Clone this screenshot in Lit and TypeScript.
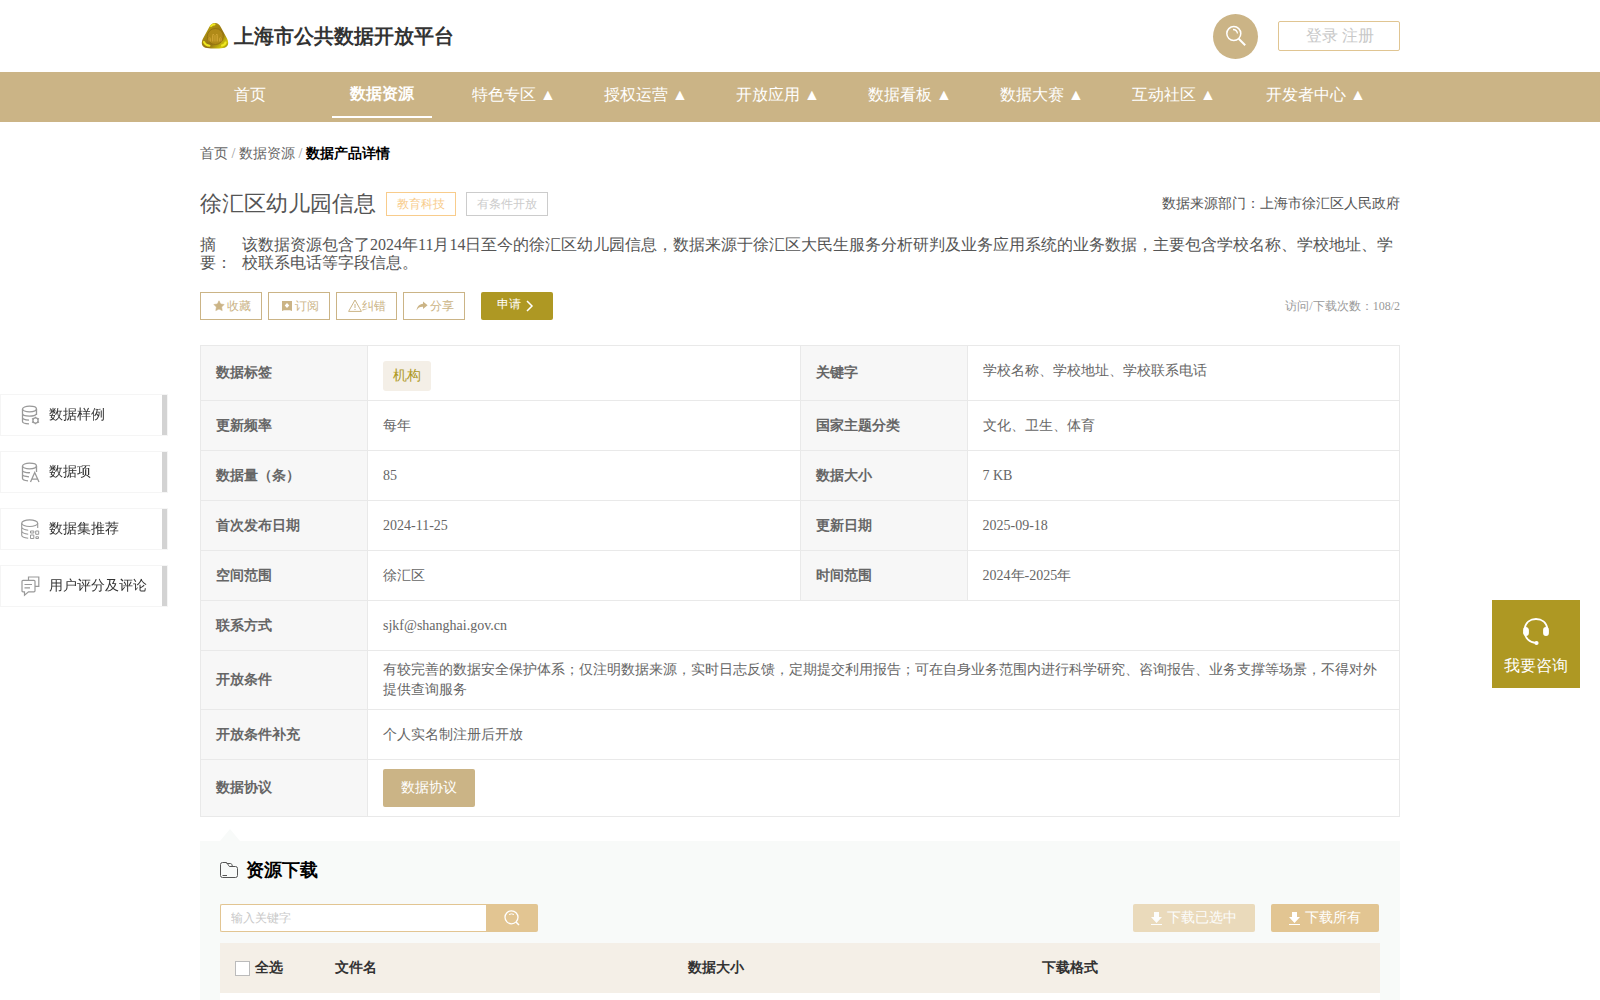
import { LitElement, html, css, svg, nothing } from "lit";
import { customElement } from "lit/decorators.js";
import { classMap } from "lit/directives/class-map.js";

interface NavItem {
  label: string;
  menu?: boolean;
  active?: boolean;
}

const NAV: NavItem[] = [
  { label: "首页" },
  { label: "数据资源", active: true },
  { label: "特色专区", menu: true },
  { label: "授权运营", menu: true },
  { label: "开放应用", menu: true },
  { label: "数据看板", menu: true },
  { label: "数据大赛", menu: true },
  { label: "互动社区", menu: true },
  { label: "开发者中心", menu: true },
];

const PAIRS: [string, string, string, string][] = [
  ["更新频率", "每年", "国家主题分类", "文化、卫生、体育"],
  ["数据量（条）", "85", "数据大小", "7 KB"],
  ["首次发布日期", "2024-11-25", "更新日期", "2025-09-18"],
  ["空间范围", "徐汇区", "时间范围", "2024年-2025年"],
];

const WIDE: [string, string][] = [
  ["联系方式", "sjkf@shanghai.gov.cn"],
  [
    "开放条件",
    "有较完善的数据安全保护体系；仅注明数据来源，实时日志反馈，定期提交利用报告；可在自身业务范围内进行科学研究、咨询报告、业务支撑等场景，不得对外提供查询服务",
  ],
  ["开放条件补充", "个人实名制注册后开放"],
];

const ACTIONS = [
  {
    label: "收藏",
    icon: svg`<path d="M6 .8l1.600 3.200 3.500.5-2.500 2.500.6 3.600L6 9l-3.200 1.600.6-3.600L.9 4.500l3.500-.5z" fill="currentColor" stroke="currentColor" stroke-width=".6"/>`,
  },
  {
    label: "订阅",
    icon: svg`<path fill-rule="evenodd" d="M1 1h10v10L9 10.200H3L1 11zM6 3l-2.300 2.500L6 8l2.300-2.500z" fill="currentColor"/>`,
  },
  {
    label: "纠错",
    wide: true,
    icon: svg`<path d="M7 1L13.400 12.400H.6z" fill="none" stroke="currentColor" stroke-linejoin="round"/><path d="M7 5v4M7 10v1" stroke="currentColor"/>`,
  },
  {
    label: "分享",
    icon: svg`<path d="M7 1.500l4.600 3.800L7 9V6.800C4 6.700 2 7.600.6 10.400 1 6.600 3.300 4 7 3.700z" fill="currentColor"/>`,
  },
];

const SIDE = [
  {
    label: "数据样例",
    icon: svg`<ellipse cx="9.500" cy="4" rx="7" ry="2.800"/><path d="M2.500 4v12.500c0 1.400 2.500 2.200 6.500 2.400M16.500 4v6M2.500 8.500c0 1.500 3 2.600 7 2.600 3.300 0 6-.8 6.800-2M2.500 12.600c0 1.400 2.400 2.400 6.500 2.600"/><circle cx="15.500" cy="15.500" r="2.600"/><path d="M15.500 11.700v1.200M15.500 18.100v1.200M12 13.500l1.300.8M17.700 16.700l1.300.8M12 17.500l1.300-.8M17.700 14.300l1.300-.8"/>`,
  },
  {
    label: "数据项",
    icon: svg`<ellipse cx="9.500" cy="4" rx="7" ry="2.800"/><path d="M2.500 4v12.500c0 1.200 2.200 2 5.500 2.300M16.500 4v6M2.500 8.500c0 1.300 3 2.400 7.500 2.200M2.500 12.600c0 1.200 2.400 2 6.500 2.200"/><path d="M10.500 20l4.200-9.500L19 20M12 17.200h5.500"/>`,
  },
  {
    label: "数据集推荐",
    icon: svg`<ellipse cx="9.700" cy="4.200" rx="8" ry="3.300" stroke-width="1.200"/><path d="M1.700 4.200v12c0 1.600 2.500 2.600 6.500 3.100M17.700 4.200V9M1.700 8.200c.5 1.600 3 2.600 6.500 3M1.700 12.200c.5 1.600 2.500 2.600 6.500 3" stroke-width="1.100"/><path d="M10.500 12h3.300v2H10.500zM15.700 12h3v3.300h-3zM10.500 16h3.300v3.500H10.500zM15.900 17.800h2.600v1.700h-2.600z" stroke-width="1"/>`,
  },
  {
    label: "用户评分及评论",
    icon: svg`<path d="M8.500 4.300V1h10.300v9.300h-3.500M3 4.300H14q1 0 1 1v9.500q0 1-1 1H8.500l-4 3.500v-3.500H3q-1 0-1-1V5.300q0-1 1-1z" stroke-width="1.200"/><path d="M4.500 8.500H12M4.500 11.800H10" stroke-width="1.200"/>`,
  },
];

@customElement("app-root")
export class AppRoot extends LitElement {
  static styles = css`
    :host {
      display: block;
      height: 100vh;
      overflow: hidden;
      background: #fff;
      color: #666;
      font-family: "Liberation Serif", serif;
      font-size: 14px;
      line-height: 20px;
    }
    * {
      box-sizing: border-box;
    }
    button,
    input {
      font: inherit;
      margin: 0;
      padding: 0;
    }
    button {
      cursor: pointer;
    }
    a {
      color: inherit;
      text-decoration: none;
    }
    svg {
      display: block;
      flex: none;
    }
    .wrap {
      max-width: 1200px;
      margin: 0 auto;
    }
    .top {
      display: flex;
      align-items: center;
      height: 72px;
    }
    .brand {
      display: flex;
      align-items: center;
      gap: 4px;
      margin-right: auto;
      color: #333;
    }
    .brand h1 {
      margin: 0;
      font-size: 20px;
      line-height: 24px;
    }
    .round {
      display: grid;
      place-items: center;
      width: 45px;
      height: 45px;
      margin-right: 20px;
      border: 0;
      border-radius: 50%;
      background: #cbb486;
      color: #fff;
    }
    .login {
      display: flex;
      justify-content: center;
      gap: 4px;
      width: 122px;
      height: 30px;
      padding-left: 1px;
      border: 1px solid #e0c592;
      border-radius: 2px;
      color: #c8c8c8;
      font-size: 16px;
      line-height: 28px;
    }
    .bar {
      background: #cbb486;
    }
    .nav {
      display: flex;
      gap: 32px;
      height: 50px;
      color: #fff;
      font-size: 16px;
    }
    .nav a {
      min-width: 100px;
      height: 46px;
      padding: 0 8px;
      line-height: 46px;
      text-align: center;
      white-space: nowrap;
    }
    .nav .last {
      padding: 0 10px;
    }
    .nav .on {
      border-bottom: 2px solid #fff;
      font-weight: bold;
      line-height: 44px;
    }
    .crumbs {
      padding-top: 22px;
      color: #999;
    }
    .crumbs a {
      color: #666;
    }
    .crumbs b {
      color: #000;
    }
    .head {
      display: flex;
      align-items: center;
      gap: 10px;
      margin-top: 24px;
      height: 32px;
      color: #555;
    }
    .head h2 {
      margin: 0;
      font-size: 22px;
      font-weight: normal;
      line-height: 32px;
    }
    .tag {
      height: 24px;
      padding: 0 10px;
      border: 1px solid #ccc;
      color: #ccc;
      font-size: 12px;
      line-height: 22px;
    }
    .tag.warm {
      border-color: #f8cc8c;
      color: #f8cc8c;
    }
    .source {
      margin-left: auto;
    }
    .summary {
      display: flex;
      gap: 10px;
      margin: 16px 0 0;
      color: #555;
      font-size: 16px;
      line-height: 18px;
    }
    .summary dt {
      flex: none;
      width: 32px;
    }
    .summary dd {
      margin: 0;
    }
    .acts {
      display: flex;
      align-items: center;
      gap: 6px;
      margin-top: 20px;
      color: #999;
      font-size: 12px;
    }
    .act {
      display: flex;
      align-items: center;
      justify-content: center;
      gap: 2px;
      width: 62px;
      height: 28px;
      padding-left: 2px;
      border: 1px solid #cbb486;
      background: #fff;
      color: #cbb486;
    }
    .act.wide {
      gap: 0;
      width: 61px;
      padding: 0;
    }
    .apply {
      display: flex;
      align-items: center;
      gap: 4px;
      width: 72px;
      height: 28px;
      margin-left: 10px;
      padding: 0 16px;
      border: 0;
      border-radius: 2px;
      background: #ae9823;
      color: #fff;
    }
    .apply span {
      padding-bottom: 4px;
    }
    .visits {
      margin-left: auto;
    }
    .info {
      width: 100%;
      margin-top: 25px;
      border-collapse: collapse;
      table-layout: fixed;
    }
    .info th,
    .info td {
      height: 50px;
      padding: 9px 15px;
      border: 1px solid #e9e9e9;
      text-align: left;
    }
    .info th {
      background: #f7f7f7;
    }
    .info .key {
      width: 167px;
    }
    .info .first th,
    .info .first td {
      height: 55px;
    }
    .info .up {
      padding-bottom: 13px;
    }
    .info .low {
      padding: 15px 15px 9px;
    }
    .chip {
      display: block;
      width: max-content;
      height: 30px;
      padding: 0 10px;
      border-radius: 3px;
      background: #f4efe7;
      color: #ae9823;
      line-height: 30px;
    }
    .deal {
      display: block;
      height: 38px;
      padding: 0 18px;
      border: 0;
      border-radius: 2px;
      background: #cbb486;
      color: #fff;
    }
    .files {
      position: relative;
      margin-top: 24px;
      padding: 17px 20px 40px;
      background: #f8faf9;
    }
    .files::before {
      content: "";
      position: absolute;
      left: 20px;
      top: -12px;
      border: 10px solid transparent;
      border-top: 0;
      border-bottom: 12px solid #f8faf9;
    }
    .files h3 {
      display: flex;
      align-items: center;
      gap: 8px;
      margin: 0;
      color: #000;
      font-size: 18px;
      line-height: 24px;
    }
    .tools {
      display: flex;
      gap: 16px;
      height: 28px;
      margin: 22px 1px 11px 0;
    }
    .find {
      display: flex;
      width: 318px;
      margin-right: auto;
    }
    .find input {
      flex: 1;
      min-width: 0;
      padding: 0 10px;
      border: 1px solid #e2c592;
      border-right: 0;
      border-radius: 2px 0 0 2px;
      background: #fff;
      font-size: 12px;
      outline: none;
    }
    .find input::placeholder {
      color: #c8c8c8;
      opacity: 1;
    }
    .find button {
      display: grid;
      place-items: center;
      width: 52px;
      border: 0;
      border-radius: 0 2px 2px 0;
      background: #e2c592;
      color: #fff;
    }
    .get {
      display: flex;
      align-items: center;
      gap: 5px;
      padding: 0 18px;
      border: 0;
      border-radius: 2px;
      background: #e2c592;
      color: #fff;
    }
    .get:disabled {
      opacity: 0.6;
    }
    .list {
      width: 100%;
      border-collapse: collapse;
      background: #fff;
      color: #333;
    }
    .list th {
      height: 50px;
      padding: 0 15px;
      background: #f4efe7;
      text-align: left;
    }
    .list td {
      height: 50px;
    }
    .list .pick {
      width: 100px;
    }
    .list .name {
      width: 353px;
    }
    .list .size {
      width: 354px;
    }
    .all {
      display: flex;
      align-items: center;
      gap: 5px;
    }
    .all input {
      appearance: none;
      width: 15px;
      height: 15px;
      border: 1px solid #bbb;
      background: #fff;
    }
    .side {
      position: fixed;
      left: 0;
      top: 394px;
      display: grid;
      gap: 15px;
      color: #333;
    }
    .side a {
      display: flex;
      align-items: center;
      gap: 9px;
      width: 168px;
      height: 42px;
      padding-left: 19px;
      border: 1px solid #f5f5f5;
      background: linear-gradient(#d3d3d3, #d3d3d3) right / 5px 100% no-repeat #fff;
    }
    .ask {
      position: fixed;
      right: 20px;
      top: 600px;
      display: flex;
      flex-direction: column;
      align-items: center;
      gap: 10px;
      width: 88px;
      height: 88px;
      padding-top: 17px;
      background: #ae9823;
      color: #fff;
      font-size: 16px;
    }
  `;

  private navLink(item: NavItem, index: number) {
    const cls = { on: !!item.active, last: index === NAV.length - 1 };
    return html`<a class=${classMap(cls)} href="#">${item.label}${item.menu ? " ▲" : nothing}</a>`;
  }

  private downIcon() {
    return html`<svg width="11" height="13" viewBox="0 0 11 13" fill="#fff" aria-hidden="true">
      <path d="M3 0h5v5h3L5.500 11 0 5h3zM0 12h11v1H0z" />
    </svg>`;
  }

  render() {
    return html`
      <header>
        <div class="wrap top">
          <a class="brand" href="#">
            <svg width="30" height="26" viewBox="0 0 30 26" aria-hidden="true">
              <defs>
                <linearGradient id="gold" x1="0" y1="0" x2="1" y2="1">
                  <stop offset="0" stop-color="#d9cc10" />
                  <stop offset=".3" stop-color="#a98c10" />
                  <stop offset=".6" stop-color="#947214" />
                  <stop offset=".85" stop-color="#d2c80a" />
                  <stop offset="1" stop-color="#7e6a10" />
                </linearGradient>
              </defs>
              <path d="M15 0c3 0 4.500 1.500 6 4.500l6 11c2.500 5 1 9-4 9.500-5 .7-11 .7-16 0-5-.5-6.500-4.500-4-9.500l6-11C10.500 1.500 12 0 15 0z" fill="url(#gold)" />
              <circle cx="15.300" cy="13.500" r="8" fill="#b08a18" stroke="#94740f" />
              <path d="M9 18.500v-3q.8-2 1.600 0v3M12.500 18.500v-6q.8-3 1.600 0v6M16 18.500v-6q.8-3 1.600 0v6M19.500 18.500v-3q.8-2 1.600 0v3" fill="none" stroke="#d4a838" stroke-width=".8" />
              <path d="M11 3q2-1.800 3.500-1.500M4 19q1.500 3.500 5.500 3.700M22 22.500q3-.5 3.500-3" fill="none" stroke="#efe820" stroke-width="2" stroke-linecap="round" />
            </svg>
            <h1>上海市公共数据开放平台</h1>
          </a>
          <button class="round" aria-label="搜索">
            <svg width="22" height="22" viewBox="0 0 22 22" fill="none" stroke="currentColor" aria-hidden="true">
              <circle cx="8.800" cy="8.600" r="7" stroke-width="1.500" />
              <path d="M8 4.500q4 .2 4.500 4" stroke-width="1.300" />
              <path d="M13.700 13.800l6.500 6.500" stroke-width="2" />
            </svg>
          </button>
          <div class="login"><a href="#">登录</a><a href="#">注册</a></div>
        </div>
        <div class="bar">
          <nav class="wrap nav">${NAV.map((n, i) => this.navLink(n, i))}</nav>
        </div>
      </header>

      <main class="wrap">
        <nav class="crumbs"><a href="#">首页</a> / <a href="#">数据资源</a> / <b>数据产品详情</b></nav>
        <div class="head">
          <h2>徐汇区幼儿园信息</h2>
          <span class="tag warm">教育科技</span>
          <span class="tag">有条件开放</span>
          <span class="source">数据来源部门：上海市徐汇区人民政府</span>
        </div>
        <dl class="summary">
          <dt>摘 要：</dt>
          <dd>该数据资源包含了2024年11月14日至今的徐汇区幼儿园信息，数据来源于徐汇区大民生服务分析研判及业务应用系统的业务数据，主要包含学校名称、学校地址、学校联系电话等字段信息。</dd>
        </dl>
        <div class="acts">
          ${ACTIONS.map(
            (a) => html`<button class=${classMap({ act: true, wide: !!a.wide })}>
              <svg width=${a.wide ? 14 : 12} height=${a.wide ? 14 : 12} viewBox=${a.wide ? "0 0 14 14" : "0 0 12 12"} aria-hidden="true">${a.icon}</svg>${a.label}
            </button>`
          )}
          <button class="apply">
            <span>申请</span>
            <svg width="9" height="12" viewBox="0 0 9 12" fill="none" stroke="currentColor" stroke-width="1.500" aria-hidden="true"><path d="M2 1l5 5-5 5" /></svg>
          </button>
          <span class="visits">访问/下载次数：108/2</span>
        </div>

        <table class="info">
          <colgroup><col class="key" /><col /><col class="key" /><col /></colgroup>
          <tbody>
            <tr class="first">
              <th scope="row">数据标签</th>
              <td class="low"><span class="chip">机构</span></td>
              <th scope="row">关键字</th>
              <td class="up">学校名称、学校地址、学校联系电话</td>
            </tr>
            ${PAIRS.map(
              ([a, b, c, d]) => html`<tr>
                <th scope="row">${a}</th><td>${b}</td>
                <th scope="row">${c}</th><td>${d}</td>
              </tr>`
            )}
            ${WIDE.map(([k, v]) => html`<tr><th scope="row">${k}</th><td colspan="3">${v}</td></tr>`)}
            <tr>
              <th scope="row">数据协议</th>
              <td colspan="3"><button class="deal">数据协议</button></td>
            </tr>
          </tbody>
        </table>

        <section class="files">
          <h3>
            <svg width="18" height="16" viewBox="0 0 18 16" fill="none" stroke="#555" aria-hidden="true">
              <path d="M2.500.5H6q1 0 1.500 1L8.500 3.500q.5 1 1.500 1h5.500q2 0 2 2v7q0 2-2 2h-13q-2 0-2-2v-11q0-2 2-2zM6.500 1.500h4q1 0 1.300 1l.7 2M2.500 13.500H7" />
            </svg>
            资源下载
          </h3>
          <div class="tools">
            <div class="find">
              <input type="text" placeholder="输入关键字" aria-label="输入关键字" />
              <button aria-label="搜索">
                <svg width="16" height="16" viewBox="0 0 16 16" fill="none" stroke="currentColor" aria-hidden="true">
                  <circle cx="7.500" cy="7.300" r="6.500" stroke-width="1.300" />
                  <path d="M5 4.500q2.500-1.300 5 0" />
                  <path d="M12 12l3 3" stroke-width="1.500" />
                </svg>
              </button>
            </div>
            <button class="get" disabled>${this.downIcon()}下载已选中</button>
            <button class="get">${this.downIcon()}下载所有</button>
          </div>
          <table class="list">
            <thead>
              <tr>
                <th class="pick"><label class="all"><input type="checkbox" />全选</label></th>
                <th class="name">文件名</th>
                <th class="size">数据大小</th>
                <th>下载格式</th>
              </tr>
            </thead>
            <tbody><tr><td colspan="4"></td></tr></tbody>
          </table>
        </section>
      </main>

      <nav class="side">
        ${SIDE.map(
          (s) => html`<a href="#">
            <svg width="20" height="21" viewBox="0 0 20 21" fill="none" stroke="#999" stroke-width="1.300" aria-hidden="true">${s.icon}</svg>${s.label}
          </a>`
        )}
      </nav>
      <a class="ask" href="#">
        <svg width="28" height="29" viewBox="0 0 28 29" fill="none" stroke="#fff" stroke-width="1.800" aria-hidden="true">
          <path d="M2.500 12C3.500 5 8.500 2 14 2s10.500 3 11.500 10M2.500 15c.5 6 5 10.500 11.500 10.800" />
          <rect x="2" y="11" width="4" height="7" rx="2" fill="#fff" />
          <rect x="22" y="11" width="4" height="7" rx="2" fill="#fff" />
          <circle cx="14.500" cy="26" r="1.200" fill="#fff" />
        </svg>
        我要咨询
      </a>
    `;
  }
}
